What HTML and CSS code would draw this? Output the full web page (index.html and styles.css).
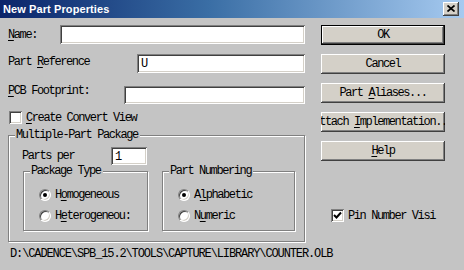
FILE: index.html
```html
<!DOCTYPE html>
<html>
<head>
<meta charset="utf-8">
<title>New Part Properties</title>
<link rel="stylesheet" href="styles.css">
</head>
<body>
<div class="window">
  <div class="titlebar">
    <span class="title">New Part Properties</span>
    <span class="close"><svg width="8" height="7" viewBox="0 0 8 7"><path d="M0.5 0.5 L7.5 6.5 M7.5 0.5 L0.5 6.5" stroke="#000" stroke-width="1.7"/></svg></span>
  </div>
  <div class="body">
    <div class="left">
      <div class="row row-name">
        <span class="lbl lbl-name"><u>N</u>ame:</span>
        <div class="input w-name"></div>
      </div>
      <div class="row row-ref">
        <span class="lbl lbl-ref">Part <u>R</u>eference</span>
        <div class="input w-ref"><span class="val">U</span></div>
      </div>
      <div class="row row-pcb">
        <span class="lbl lbl-pcb"><u>P</u>CB Footprint:</span>
        <div class="input w-pcb"></div>
      </div>
      <div class="check-row">
        <span class="checkbox"></span>
        <span class="lbl"><u>C</u>reate Convert View</span>
      </div>
      <div class="group outer">
        <span class="caption">Multiple-Part Package</span>
        <div class="parts-row">
          <span class="lbl parts-lbl">Parts per</span>
          <div class="input w-parts"><span class="val">1</span></div>
        </div>
        <div class="subgroups">
          <div class="group sub sub-type">
            <span class="caption">Package Type</span>
            <div class="radio-row"><span class="radio on"></span><span class="lbl">H<u>o</u>mogeneous</span></div>
            <div class="radio-row"><span class="radio"></span><span class="lbl">H<u>e</u>terogeneou:</span></div>
          </div>
          <div class="group sub sub-num">
            <span class="caption">Part Numbering</span>
            <div class="radio-row"><span class="radio on"></span><span class="lbl">A<u>l</u>phabetic</span></div>
            <div class="radio-row"><span class="radio"></span><span class="lbl">N<u>u</u>meric</span></div>
          </div>
        </div>
      </div>
    </div>
    <div class="right">
      <div class="btn default"><span>OK</span></div>
      <div class="btn"><span>Cancel</span></div>
      <div class="btn"><span>Part <u>A</u>liases...</span></div>
      <div class="btn"><span>Attach <u>I</u>mplementation...</span></div>
      <div class="btn"><span><u>H</u>elp</span></div>
      <div class="check-row pin">
        <span class="checkbox checked"><svg width="9" height="9" viewBox="0 0 9 9"><path d="M1 4 L3.5 6.5 L8 1.5" fill="none" stroke="#000" stroke-width="2"/></svg></span>
        <span class="lbl">Pin Number Visi</span>
      </div>
    </div>
  </div>
  <div class="status">D:\CADENCE\SPB_15.2\TOOLS\CAPTURE\LIBRARY\COUNTER.OLB</div>
</div>
</body>
</html>
```

FILE: styles.css
```css
* { box-sizing: border-box; }
html, body { margin: 0; padding: 0; }
body {
  width: 464px;
  height: 270px;
  overflow: hidden;
  background: #c4c4c4;
}
.window {
  width: 464px;
  height: 270px;
  background: #c4c4c4;
  font-family: "Liberation Mono", "DejaVu Sans Mono", monospace;
  font-size: 12px;
  font-weight: normal;
  letter-spacing: -1.4px;
  color: #000;
  line-height: 12px;
}
u { text-decoration: underline; text-underline-offset: 2px; }

.titlebar {
  height: 18px;
  background: linear-gradient(to right, #0a246a 0%, #3a6ea5 45%, #a6caf0 100%);
  display: flex;
  align-items: center;
  padding: 0 5px 0 3px;
}
.title {
  flex: 1;
  font-family: "Liberation Sans", Arial, sans-serif;
  font-size: 11px;
  font-weight: bold;
  letter-spacing: 0.1px;
  color: #fff;
}
.close {
  width: 16px;
  height: 14px;
  background: #d4d0c8;
  box-shadow: inset -1px -1px #404040, inset 1px 1px #fff, inset -2px -2px #808080;
  display: flex;
  align-items: center;
  justify-content: center;
  padding-bottom: 1px;
}

.body {
  display: flex;
  padding: 7px 0 0 8px;
}
.left { width: 297px; }
.right {
  width: 124px;
  margin-left: 16px;
  display: flex;
  flex-direction: column;
  gap: 9px;
}

.row { display: flex; align-items: flex-start; }
.row .input { margin-left: auto; }
.lbl { white-space: nowrap; }
.lbl-name { margin-top: 4px; }
.lbl-ref { margin-top: 2px; }
.lbl-pcb { margin-top: -1px; }
.row-ref { margin-top: 10px; }
.row-pcb { margin-top: 13px; }

.input {
  background: #fff;
  box-shadow: inset 1px 1px #808080, inset -1px -1px #fff, inset 2px 2px #404040, inset -2px -2px #d4d0c8;
  display: flex;
  align-items: center;
  padding: 1px 0 0 4px;
}
.w-name { width: 245px; height: 19px; }
.w-ref { width: 168px; height: 19px; }
.w-pcb { width: 181px; height: 18px; }
.w-parts { width: 36px; height: 18px; }

.check-row {
  display: flex;
  align-items: center;
  gap: 4px;
  margin-top: 7px;
  padding-left: 1px;
}
.checkbox {
  width: 13px;
  height: 13px;
  flex: none;
  background: #fff;
  box-shadow: inset 1px 1px #808080, inset -1px -1px #fff, inset 2px 2px #404040, inset -2px -2px #d4d0c8;
  display: flex;
  align-items: center;
  justify-content: center;
}

.group {
  position: relative;
  border: 1px solid #808080;
  box-shadow: inset 1px 1px #fff, 1px 1px #fff;
}
.caption {
  position: absolute;
  top: -7px;
  left: 6px;
  padding: 0 2px 0 1px;
  background: #c4c4c4;
}
.outer {
  margin-top: 11px;
  width: 297px;
  height: 107px;
  padding-top: 11px;
}
.parts-row {
  display: flex;
  align-items: center;
  height: 18px;
}
.parts-lbl { width: 89px; margin-left: 13px; }
.subgroups {
  display: flex;
  gap: 14px;
  margin-top: 6px;
  padding-left: 14px;
}
.sub {
  height: 60px;
  padding: 17px 0 0 15px;
  display: flex;
  flex-direction: column;
  gap: 9px;
}
.sub-type { width: 125px; }
.sub-num { width: 133px; }
.radio-row {
  display: flex;
  align-items: center;
  gap: 4px;
  height: 12px;
}
.radio {
  width: 12px;
  height: 12px;
  flex: none;
  border-radius: 50%;
  background: #fff;
  border: 1px solid;
  border-color: #808080 #fff #fff #808080;
  box-shadow: inset 1px 1px #404040, inset -1px -1px #d4d0c8;
  position: relative;
}
.radio.on::after {
  content: "";
  position: absolute;
  left: 3px;
  top: 3px;
  width: 4px;
  height: 4px;
  border-radius: 50%;
  background: #000;
}

.btn {
  height: 20px;
  background: #d4d0c8;
  box-shadow: inset -1px -1px #404040, inset 1px 1px #fff, inset -2px -2px #808080;
  display: flex;
  align-items: center;
  justify-content: center;
  overflow: hidden;
  white-space: nowrap;
  padding: 0 3px;
}
.btn span { flex: none; }
.btn.default {
  border: 1px solid #000;
}
.pin {
  margin-top: 39px;
  padding-left: 10px;
}

.status {
  padding-left: 10px;
  margin-top: 6px;
  white-space: nowrap;
  letter-spacing: -1.12px;
}
```
